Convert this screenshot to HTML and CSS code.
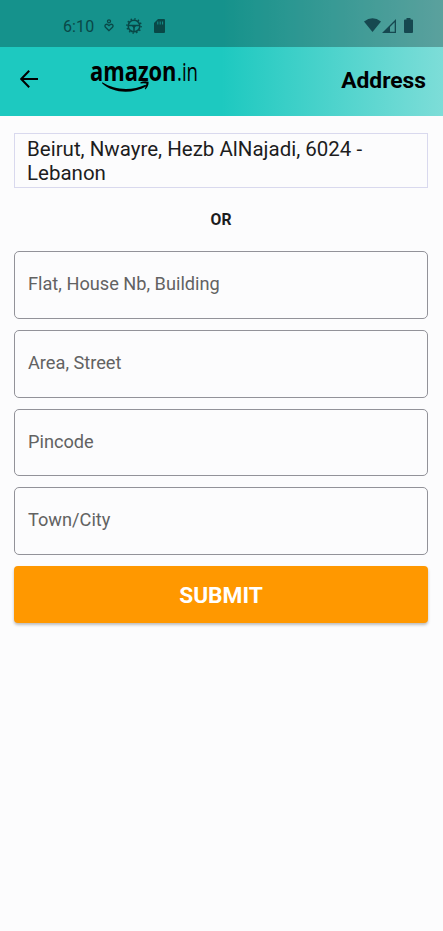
FILE: index.html
```html
<!DOCTYPE html>
<html lang="en">
<head>
<meta charset="utf-8">
<title>Address</title>
<link rel="stylesheet" href="styles.css">
</head>
<body>
<header class="top">
  <div class="status">
    <span class="time">6:10</span>
    <svg class="heart" width="10" height="13" viewBox="0 0 10 13" fill="none" stroke="currentColor" stroke-width="1.3"><circle cx="5" cy="2.3" r="1.5"/><path d="M5 11.700 1.500 8.300C-.3 6.200 2.500 3.800 5 6.600 7.500 3.800 10.300 6.200 8.500 8.300Z"/></svg>
    <svg class="gear" width="16" height="16" viewBox="0 0 16 16" fill="none" stroke="currentColor"><circle cx="8" cy="8" r="5.800" stroke-width="1.500"/><circle cx="8" cy="8" r="7.100" stroke-width="1.500" stroke-dasharray="1.500 2.217"/><path d="M2.500 7.500h11M8 7.500v6" stroke-width="1.500"/><path fill="currentColor" stroke="none" d="M5.500 7.500h5L8 10.500Z"/></svg>
    <svg class="card" width="11" height="14" viewBox="0 0 11 14"><path fill="currentColor" fill-rule="evenodd" d="M4 0h6q1 0 1 1v12q0 1-1 1H1q-1 0-1-1V4ZM3.300 2.500v3h1v-3ZM5.700 2.500v3h1v-3ZM8.100 2.500v3h1v-3Z"/></svg>
    <svg class="wifi" width="17" height="14" viewBox="0 0 17 14"><path fill="currentColor" d="M0 3.500Q8.500-3.200 17 3.500L8.500 14Z"/></svg>
    <svg class="signal" width="14" height="14" viewBox="0 0 14 14"><path fill="currentColor" fill-rule="evenodd" d="M14 0v14H0ZM12.700 3.200 8 8v4.700h4.700Z"/></svg>
    <svg class="battery" width="9" height="15" viewBox="0 0 9 15"><path fill="currentColor" d="M2.500 0h4v1.500H8q1 0 1 1V14q0 1-1 1H1q-1 0-1-1V2.500q0-1 1-1h1.500Z"/></svg>
  </div>
  <div class="bar">
    <svg class="back" width="18" height="18" viewBox="0 0 18 18" fill="none" stroke="#000" stroke-width="2"><path d="M18 9H1.500M9.200.8 1.200 9l8 8.200"/></svg>
    <svg class="logo" width="108" height="36" viewBox="0 0 108 36">
      <text class="brand" x="0" y="22" textLength="86.500" lengthAdjust="spacingAndGlyphs">amazon</text>
      <text class="region" x="87" y="22" textLength="21" lengthAdjust="spacingAndGlyphs">.in</text>
      <path d="M12.300 23.300C25 31.500 42 32 55.500 25.800L56.500 27.300C42 35.500 23 34.500 12 24.300Z"/>
      <path d="M50.500 23.300Q54.500 21.700 58.600 22.800C58.800 26.200 57.300 29 55.300 30.500L54.800 29.700Q56.300 27 56.400 24.600 54 23.900 50.500 24.500Z"/>
    </svg>
    <h1 class="title">Address</h1>
  </div>
</header>
<main class="content">
  <div class="saved">Beirut, Nwayre, Hezb AlNajadi, 6024 -<br>Lebanon</div>
  <div class="or">OR</div>
  <form class="form">
    <div class="field">Flat, House Nb, Building</div>
    <div class="field">Area, Street</div>
    <div class="field">Pincode</div>
    <div class="field">Town/City</div>
    <button class="submit" type="button">SUBMIT</button>
  </form>
</main>
</body>
</html>
```
FILE: styles.css
```css
* { box-sizing: border-box; }
body {
  margin: 0;
  min-height: 931px;
  background: #fcfcfd;
  color: #1d1d1d;
  font-family: Roboto, sans-serif;
}
.top {
  height: 116px;
  background: linear-gradient(90deg, #1dc9c0 50%, #7dddd8);
}
.status {
  display: flex;
  align-items: center;
  height: 47px;
  padding: 5px 30px 0 63px;
  background: rgba(0, 0, 0, .27);
  color: #094847;
}
.time { width: 31px; font-size: 16px; letter-spacing: .1px; }
.heart { margin-left: 10px; margin-top: -1px; }
.gear { margin-left: 12px; margin-top: -1px; }
.card { margin-left: 12px; margin-top: -1px; }
.wifi { margin-left: auto; margin-top: -2px; color: #164850; }
.signal { margin-left: 1px; margin-top: -1px; color: #164850; }
.battery { margin-left: 8px; margin-top: -1px; color: #164850; }
.bar {
  display: flex;
  align-items: center;
  height: 69px;
  padding: 0 17px 0 20px;
}
.back { margin-top: -5px; }
.logo { margin-left: 52px; margin-top: -9px; overflow: visible; }
.brand { font: 700 27px "Open Sans", sans-serif; }
.region { font: 400 26px "Open Sans", sans-serif; }
.title {
  margin: -1px 0 0 auto;
  color: #000;
  font-size: 22.8px;
  font-weight: 700;
  line-height: 28px;
}
.content { padding: 17px 15px 0 14px; }
.saved {
  height: 55px;
  padding: 3px 12px;
  border: 1px solid #d9d9ee;
  font-size: 20.5px;
  line-height: 24px;
  white-space: nowrap;
}
.or {
  margin-top: 21px;
  font-size: 15.7px;
  font-weight: 700;
  line-height: 22px;
  text-align: center;
}
.form { display: flex; flex-direction: column; gap: 11px; margin-top: 20.4px; }
.field {
  height: 67.7px;
  padding: 0 13px 2px;
  border: 1px solid #929299;
  border-radius: 5px;
  color: #626262;
  font-size: 18.2px;
  line-height: 63px;
}
.submit {
  height: 57px;
  border: 0;
  border-radius: 4px;
  background: #ff9800;
  box-shadow: 0 2px 3px rgba(0, 0, 0, .25);
  color: #fff;
  font: 700 22.7px/58px Roboto, sans-serif;
}
```
